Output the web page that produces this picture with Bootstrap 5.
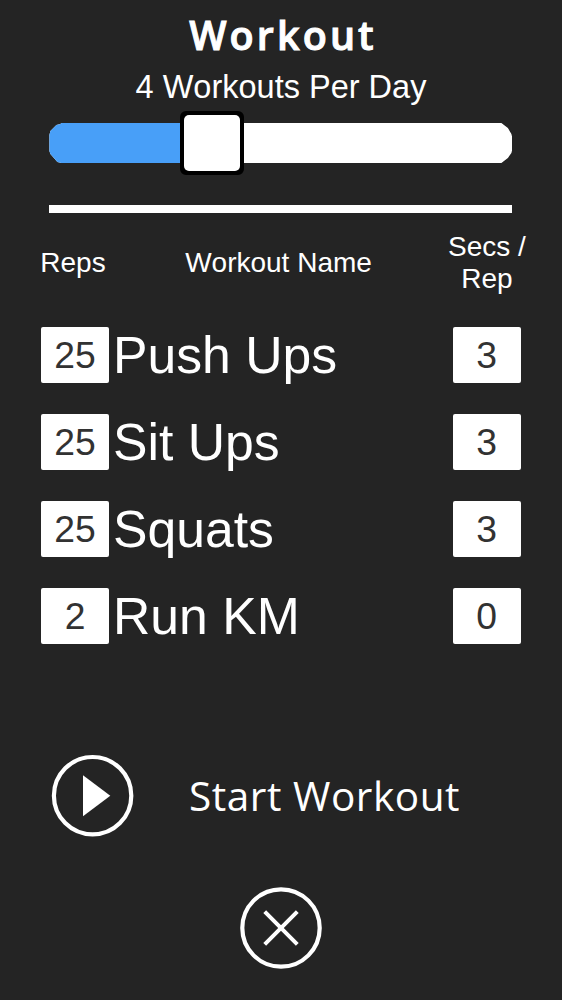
<!DOCTYPE html>
<html lang="en">
<head>
<meta charset="utf-8">
<meta name="viewport" content="width=device-width, initial-scale=1">
<title>Workout</title>
<link href="https://cdn.jsdelivr.net/npm/bootstrap@5.3.0/dist/css/bootstrap.min.css" rel="stylesheet">
<style>
  body { background: #242424; color: #fff; font-family: "Liberation Sans", Arial, sans-serif; font-kerning: none; }
  .screen { height: 1000px; overflow: hidden; }
  .app-title { font: 600 39.5px/50px "Open Sans", sans-serif; letter-spacing: 3.1px; padding: 10px 0 0 4px; -webkit-text-stroke: 1px #fff; }
  .per-day { font-size: 32.5px; line-height: 40px; margin-top: 7px; }
  .slider { height: 40px; width: 463px; margin: 16px 0 0 49.4px; }
  .slider-track { height: 40px; background: #fff; clip-path: polygon(0 12px, 1px 8px, 7px 2px, 11px 1px, 12px 0, calc(100% - 11px) 0, calc(100% - 4.5px) 5px, calc(100% - 1px) 11px, 100% 15px, 100% 26px, calc(100% - 1px) 30px, calc(100% - 4.5px) 35px, calc(100% - 11px) 40px, 12px 40px, 8px 39px, 1px 31px, 0 28px); }
  .slider-fill { background: #489ff8; }
  .slider-knob { width: 64px; height: 64px; top: -12px; border: 4px solid #000; border-radius: 6px; background: #000; }
  .slider-knob::before { content: ""; display: block; height: 100%; border-radius: 5px; background: #fff; }
  .divider { height: 7.5px; width: 463px; margin: 42.3px 0 0 49.4px; background: #fff; }
  .heads { height: 98px; font-size: 28px; line-height: 32px; padding: 2px 33px 0 31px; }
  .col-side { width: 84px; }
  .col-side:last-child { width: 84px; }
  .col-mid { padding-right: 3px; }
  .rows { gap: 31px; padding: 0 41.5px 0 41px; margin-top: 16.5px; }
  .num { width: 68px; height: 56px; padding: 0; border: 0; border-radius: 2px; color: #323232; font-size: 37.3px; line-height: 56px; }
  .num:focus { box-shadow: none; }
  .exercise { font-size: 51.7px; line-height: 56px; padding-left: 4px; }
  .start { margin: 110.3px 0 0 51px; height: 82px; }
  .start-label { font: 400 40.5px/56px "Open Sans", sans-serif; letter-spacing: .55px; margin-left: 56px; padding-top: 1px; }
  .close-btn { margin-top: 50px; }
  .plain { background: none; border: 0; color: inherit; padding: 0; }
</style>
</head>
<body>
<main class="screen d-flex flex-column">
  <h1 class="app-title text-center m-0">Workout</h1>
  <div class="per-day text-center">4 Workouts Per Day</div>
  <div class="slider position-relative">
    <div class="slider-track overflow-hidden"><div class="slider-fill h-100" style="width:35%"></div></div>
    <div class="slider-knob position-absolute start-0" style="margin-left:130.2px"></div>
  </div>
  <div class="divider"></div>
  <div class="heads d-flex align-items-center text-center">
    <div class="col-side">Reps</div>
    <div class="col-mid flex-grow-1">Workout Name</div>
    <div class="col-side">Secs / Rep</div>
  </div>
  <div class="rows d-flex flex-column">
    <div class="d-flex"><input class="num form-control bg-white text-center" value="25" aria-label="Reps"><div class="exercise flex-grow-1">Push Ups</div><input class="num form-control bg-white text-center" value="3" aria-label="Seconds"></div>
    <div class="d-flex"><input class="num form-control bg-white text-center" value="25" aria-label="Reps"><div class="exercise flex-grow-1">Sit Ups</div><input class="num form-control bg-white text-center" value="3" aria-label="Seconds"></div>
    <div class="d-flex"><input class="num form-control bg-white text-center" value="25" aria-label="Reps"><div class="exercise flex-grow-1">Squats</div><input class="num form-control bg-white text-center" value="3" aria-label="Seconds"></div>
    <div class="d-flex"><input class="num form-control bg-white text-center" value="2" aria-label="Reps"><div class="exercise flex-grow-1">Run KM</div><input class="num form-control bg-white text-center" value="0" aria-label="Seconds"></div>
  </div>
  <button class="start plain d-flex align-items-center" type="button">
    <svg width="82" height="82" viewBox="0 0 82 82" overflow="visible"><circle cx="41.6" cy="40.7" r="38.7" fill="none" stroke="#fff" stroke-width="4.2"/><path d="M32 20.3V61.3L59.3 40.7Z" fill="#fff"/></svg>
    <span class="start-label">Start Workout</span>
  </button>
  <button class="close-btn plain align-self-center d-flex" type="button" aria-label="Close">
    <svg width="82" height="82" viewBox="0 0 82 82"><circle cx="41" cy="41" r="38.7" fill="none" stroke="#fff" stroke-width="4.2"/><path d="M24.7 24.7L57.3 57.3M57.3 24.7L24.7 57.3" stroke="#fff" stroke-width="4"/></svg>
  </button>
</main>
<script src="https://cdn.jsdelivr.net/npm/bootstrap@5.3.0/dist/js/bootstrap.bundle.min.js"></script>
</body>
</html>
